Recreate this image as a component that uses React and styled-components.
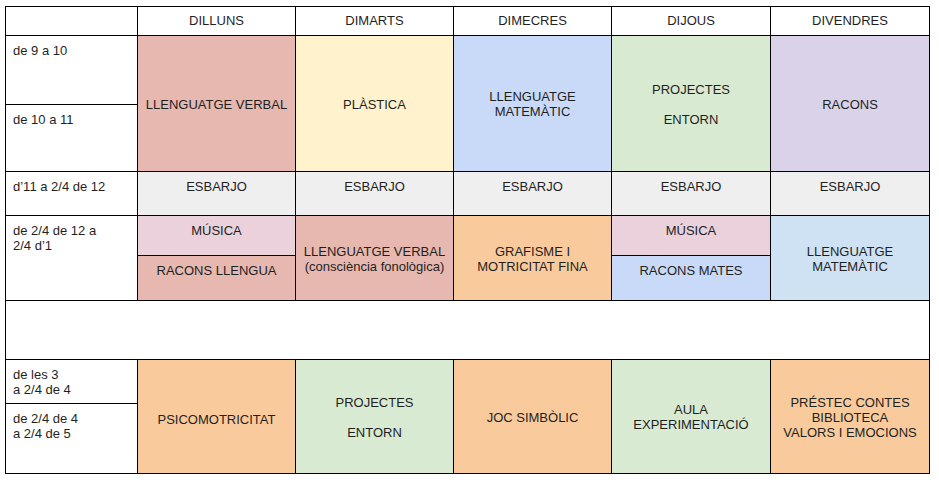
import React from "react";
import styled, { createGlobalStyle } from "styled-components";

const Global = createGlobalStyle`
  html, body { margin: 0; padding: 0; background: #ffffff; }
  body { font-family: "Liberation Sans", Arial, sans-serif; }
`;

const Page = styled.div`
  padding: 6px 0 0 5px;
`;

const Table = styled.table`
  border-collapse: collapse;
  table-layout: fixed;
  width: 924px;
  font-family: "Liberation Sans", Arial, sans-serif;
  font-size: 13px;
  line-height: 15px;
  color: #1f1f1f;
`;

const Row = styled.tr`
  height: ${(p) => p.$h}px;
`;

const Cell = styled.td`
  border: 1px solid #000;
  padding: ${(p) => (p.$pt != null ? p.$pt : 7)}px 6px 6px ${(p) => (p.$left ? 7 : 6)}px;
  background: ${(p) => p.$bg || "#ffffff"};
  text-align: ${(p) => (p.$left ? "left" : "center")};
  vertical-align: ${(p) => (p.$mid ? "middle" : "top")};
  box-sizing: border-box;
`;

const HeadCell = styled.th`
  border: 1px solid #000;
  padding: 6px 6px;
  font-weight: normal;
  text-align: center;
  vertical-align: top;
  background: #ffffff;
`;

const C = {
  red: "#e6b8af",
  yellow: "#fff2cc",
  blue: "#c9daf8",
  green: "#d9ead3",
  purple: "#d9d2e9",
  gray: "#efefef",
  magenta: "#ead1dc",
  orange: "#f9cb9c",
  lightBlue: "#cfe2f3",
};

const days = ["DILLUNS", "DIMARTS", "DIMECRES", "DIJOUS", "DIVENDRES"];

export default function App() {
  return (
    <Page>
      <Global />
      <Table>
        <colgroup>
          <col style={{ width: 132 }} />
          <col style={{ width: 158 }} />
          <col style={{ width: 158 }} />
          <col style={{ width: 158 }} />
          <col style={{ width: 159 }} />
          <col style={{ width: 159 }} />
        </colgroup>
        <tbody>
          <Row $h={29}>
            <HeadCell />
            {days.map((d) => (
              <HeadCell key={d}>{d}</HeadCell>
            ))}
          </Row>
          <Row $h={69}>
            <Cell $left>de 9 a 10</Cell>
            <Cell rowSpan={2} $mid $bg={C.red}>LLENGUATGE VERBAL</Cell>
            <Cell rowSpan={2} $mid $bg={C.yellow}>PLÀSTICA</Cell>
            <Cell rowSpan={2} $mid $bg={C.blue}>
              LLENGUATGE
              <br />
              MATEMÀTIC
            </Cell>
            <Cell rowSpan={2} $mid $bg={C.green}>
              PROJECTES
              <br />
              <br />
              ENTORN
            </Cell>
            <Cell rowSpan={2} $mid $bg={C.purple}>RACONS</Cell>
          </Row>
          <Row $h={67}>
            <Cell $left>de 10 a 11</Cell>
          </Row>
          <Row $h={44}>
            <Cell $left>d’11 a 2/4 de 12</Cell>
            {days.map((d) => (
              <Cell key={d} $bg={C.gray}>ESBARJO</Cell>
            ))}
          </Row>
          <Row $h={40}>
            <Cell rowSpan={2} $left>
              de 2/4 de 12 a
              <br />
              2/4 d’1
            </Cell>
            <Cell $bg={C.magenta}>MÚSICA</Cell>
            <Cell rowSpan={2} $mid $bg={C.red}>
              LLENGUATGE VERBAL
              <br />
              (consciència fonològica)
            </Cell>
            <Cell rowSpan={2} $mid $bg={C.orange}>
              GRAFISME I
              <br />
              MOTRICITAT FINA
            </Cell>
            <Cell $bg={C.magenta}>MÚSICA</Cell>
            <Cell rowSpan={2} $mid $bg={C.lightBlue}>
              LLENGUATGE
              <br />
              MATEMÀTIC
            </Cell>
          </Row>
          <Row $h={45}>
            <Cell $bg={C.red}>RACONS LLENGUA</Cell>
            <Cell $bg={C.blue}>RACONS MATES</Cell>
          </Row>
          <Row $h={59}>
            <Cell colSpan={6} />
          </Row>
          <Row $h={44}>
            <Cell $left>
              de les 3
              <br />
              a 2/4 de 4
            </Cell>
            <Cell rowSpan={2} $mid $pt={12} $bg={C.orange}>PSICOMOTRICITAT</Cell>
            <Cell rowSpan={2} $mid $bg={C.green}>
              PROJECTES
              <br />
              <br />
              ENTORN
            </Cell>
            <Cell rowSpan={2} $mid $bg={C.orange}>JOC SIMBÒLIC</Cell>
            <Cell rowSpan={2} $mid $bg={C.green}>
              AULA
              <br />
              EXPERIMENTACIÓ
            </Cell>
            <Cell rowSpan={2} $mid $bg={C.orange}>
              PRÉSTEC CONTES
              <br />
              BIBLIOTECA
              <br />
              VALORS I EMOCIONS
            </Cell>
          </Row>
          <Row $h={70}>
            <Cell $left>
              de 2/4 de 4
              <br />
              a 2/4 de 5
            </Cell>
          </Row>
        </tbody>
      </Table>
    </Page>
  );
}
